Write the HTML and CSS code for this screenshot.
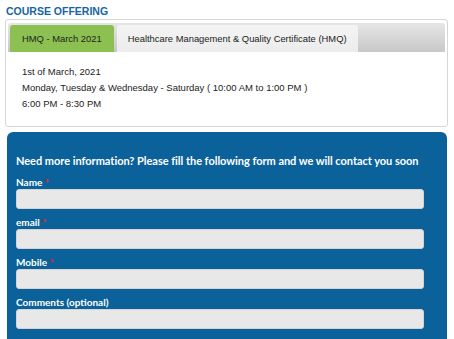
FILE: index.html
```html
<!DOCTYPE html>
<html lang="en">
<head>
    <meta charset="UTF-8">
    <meta name="viewport" content="width=device-width, initial-scale=1.0">
    <title>Course Offering</title>
    <link rel="stylesheet" href="styles.css">
</head>
<body>
    <h2 class="section-title">COURSE OFFERING</h2>

    <div class="course-panel">
        <ul class="tabs">
            <li class="tab active">HMQ - March 2021</li>
            <li class="tab">Healthcare Management &amp; Quality Certificate (HMQ)</li>
        </ul>
        <div class="tab-content">
            <p>1st of March, 2021</p>
            <p>Monday, Tuesday &amp; Wednesday - Saturday ( 10:00 AM to 1:00 PM )</p>
            <p>6:00 PM - 8:30 PM</p>
        </div>
    </div>

    <form class="enquiry-form">
        <h3>Need more information? Please fill the following form and we will contact you soon</h3>

        <label for="name">Name <span class="req">*</span></label>
        <input type="text" id="name">

        <label for="email">email <span class="req">*</span></label>
        <input type="text" id="email">

        <label for="mobile">Mobile <span class="req">*</span></label>
        <input type="text" id="mobile">

        <label for="comments">Comments (optional)</label>
        <input type="text" id="comments">
    </form>
</body>
</html>
```

FILE: styles.css
```css
body {
    margin: 0;
    padding: 5px 6px 0 5px;
    font-family: "Liberation Sans", Arial, sans-serif;
    background-color: #fff;
}
.section-title {
    margin: 0 0 1px 1px;
    font-size: 10.5px;
    line-height: 13px;
    font-weight: bold;
    color: #17649f;
}
.course-panel {
    border: 1px solid #d6d6d6;
    border-radius: 3px;
    padding: 3px 2px 0 2px;
    height: 108px;
    box-sizing: border-box;
}
.tabs {
    list-style: none;
    margin: 0;
    padding: 2px 2px 0 2px;
    display: flex;
    gap: 3px;
    height: 29px;
    box-sizing: border-box;
    background: linear-gradient(#e6e6e6, #c8c8c8);
    border-radius: 3px 3px 0 0;
}
.tab {
    padding: 0 11px;
    font-size: 9.4px;
    line-height: 27px;
    white-space: nowrap;
    color: #222;
    background: linear-gradient(#f4f4f4, #ececec);
    border-radius: 3px 3px 0 0;
}
.tab.active {
    background: #8cc152;
    padding: 0 12px;
}
.tab-content {
    padding: 12px 14px 0 14px;
    font-size: 9.5px;
    color: #222;
}
.tab-content p {
    margin: 0;
    line-height: 16px;
}
.enquiry-form {
    margin: 5px 1px 0 2px;
    background-color: #0b6199;
    border-radius: 6px;
    padding: 22px 23px 10px 9px;
    height: 220px;
    box-sizing: border-box;
    display: flex;
    flex-direction: column;
    font-family: Lato, "Open Sans", sans-serif;
}
.enquiry-form h3 {
    margin: 0 0 8px 0;
    font-size: 11px;
    letter-spacing: -0.03px;
    line-height: 14px;
    color: #fff;
    white-space: nowrap;
}
.enquiry-form label {
    color: #fff;
    font-size: 10px;
    font-weight: bold;
    line-height: 12px;
    margin-bottom: 1px;
}
.req {
    color: #e22;
}
.enquiry-form input {
    height: 20px;
    box-sizing: border-box;
    border: 1px solid #d4d4d4;
    border-radius: 3px;
    background-color: #e8e8e8;
    margin-bottom: 7px;
}
```
